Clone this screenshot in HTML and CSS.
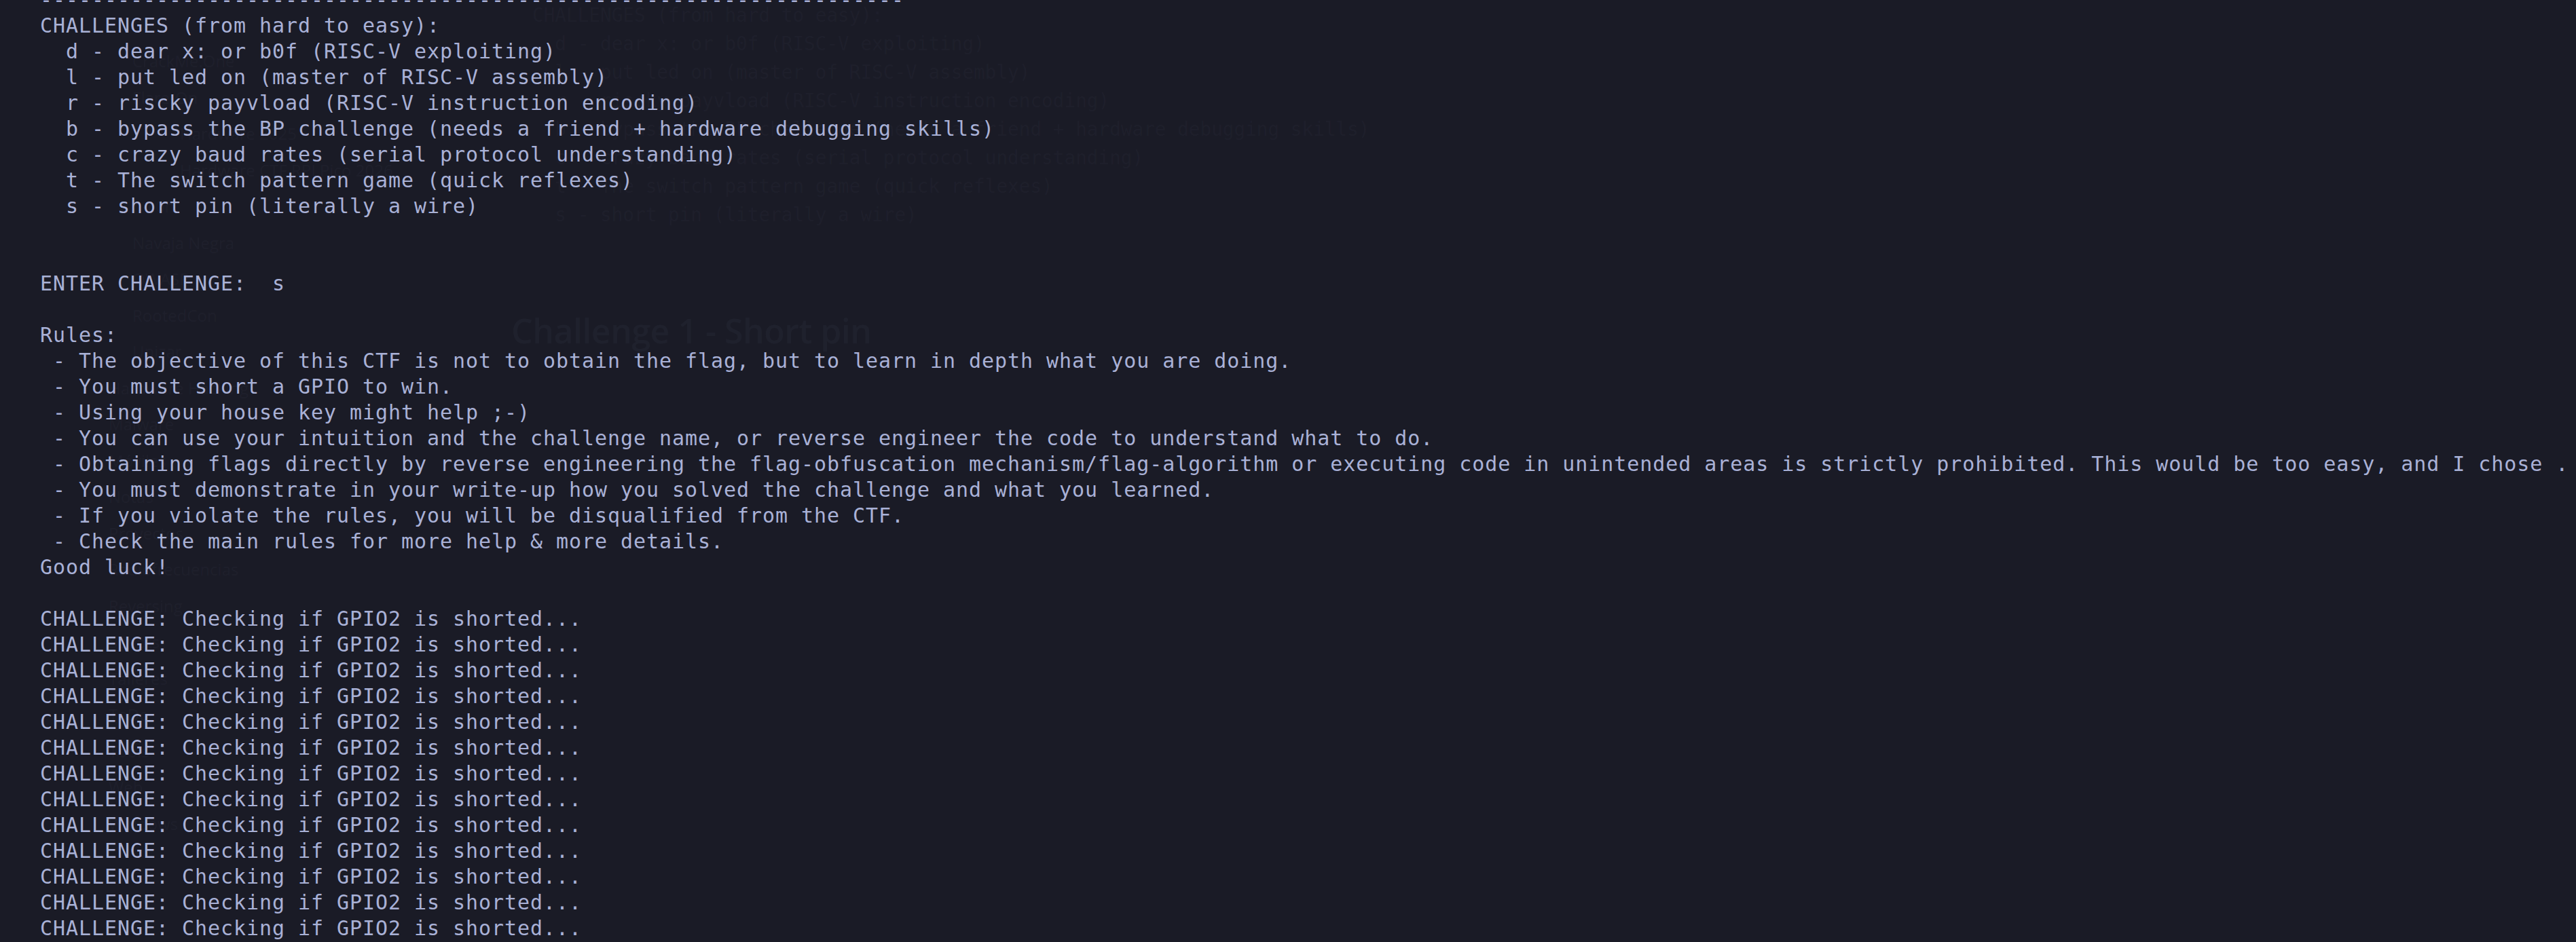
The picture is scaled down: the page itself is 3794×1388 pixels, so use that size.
FILE: index.html
```html
<!DOCTYPE html>
<html lang="en">
<head>
<meta charset="utf-8">
<title>Serial terminal</title>
<link rel="stylesheet" href="styles.css">
</head>
<body>
<div class="screen">
  <div class="ghost">
    <nav class="g-side">
      <div class="g-item sub">CrackMe.One</div>
      <div class="g-item sub">Flare-On</div>
      <div class="g-item sub2">Hardware 2025</div>
      <div class="g-item sub2">Hardware CTF RPI Pico 2026</div>
      <div class="g-item sub">h-c0n</div>
      <div class="g-item sub">Navaja Negra</div>
      <div class="g-item sub">OWASP</div>
      <div class="g-item sub">RootedCon</div>
      <div class="g-item sub">Unizar</div>
      <div class="g-item">Hardware Hacking</div>
      <div class="g-item">Malware</div>
      <div class="g-item">Móviles</div>
      <div class="g-item">Notas</div>
      <div class="g-item">Proyectos</div>
      <div class="g-item">Radiofrecuencias</div>
      <div class="g-item">Reversing</div>
      <div class="g-item">Scripts</div>
      <div class="g-item">Talleres</div>
      <div class="g-item">ToDo</div>
      <div class="g-item">Tools</div>
      <div class="g-item">Web</div>
      <div class="g-item">Windows</div>
    </nav>
    <div class="g-main">
<pre class="g-code">CHALLENGES (from hard to easy):
  d - dear x: or b0f (RISC-V exploiting)
  l - put led on (master of RISC-V assembly)
  r - riscky payvload (RISC-V instruction encoding)
  b - bypass the BP challenge (needs a friend + hardware debugging skills)
  c - crazy baud rates (serial protocol understanding)
  t - The switch pattern game (quick reflexes)
  s - short pin (literally a wire)</pre>
      <h1 class="g-title">Challenge 1 - Short pin</h1>
    </div>
  </div>
<pre class="term">-------------------------------------------------------------------
CHALLENGES (from hard to easy):
  d - dear x: or b0f (RISC-V exploiting)
  l - put led on (master of RISC-V assembly)
  r - riscky payvload (RISC-V instruction encoding)
  b - bypass the BP challenge (needs a friend + hardware debugging skills)
  c - crazy baud rates (serial protocol understanding)
  t - The switch pattern game (quick reflexes)
  s - short pin (literally a wire)


ENTER CHALLENGE:  s

Rules:
 - The objective of this CTF is not to obtain the flag, but to learn in depth what you are doing.
 - You must short a GPIO to win.
 - Using your house key might help ;-)
 - You can use your intuition and the challenge name, or reverse engineer the code to understand what to do.
 - Obtaining flags directly by reverse engineering the flag-obfuscation mechanism/flag-algorithm or executing code in unintended areas is strictly prohibited. This would be too easy, and I chose .
 - You must demonstrate in your write-up how you solved the challenge and what you learned.
 - If you violate the rules, you will be disqualified from the CTF.
 - Check the main rules for more help &amp; more details.
Good luck!

CHALLENGE: Checking if GPIO2 is shorted...
CHALLENGE: Checking if GPIO2 is shorted...
CHALLENGE: Checking if GPIO2 is shorted...
CHALLENGE: Checking if GPIO2 is shorted...
CHALLENGE: Checking if GPIO2 is shorted...
CHALLENGE: Checking if GPIO2 is shorted...
CHALLENGE: Checking if GPIO2 is shorted...
CHALLENGE: Checking if GPIO2 is shorted...
CHALLENGE: Checking if GPIO2 is shorted...
CHALLENGE: Checking if GPIO2 is shorted...
CHALLENGE: Checking if GPIO2 is shorted...
CHALLENGE: Checking if GPIO2 is shorted...
CHALLENGE: Checking if GPIO2 is shorted...
CHALLENGE: Checking if GPIO2 is shorted...</pre>
</div>
</body>
</html>
```
FILE: styles.css
```css
html, body {
  margin: 0;
  padding: 0;
  background: #1a1b26;
  overflow: hidden;
}

.screen {
  display: grid;
  grid-template-columns: 3794px;
  width: 3794px;
  height: 1388px;
  overflow: hidden;
  background: #1a1b26;
}

.ghost, .term {
  grid-area: 1 / 1;
  min-width: 0;
}

/* faint window content seen through the terminal */
.ghost {
  display: flex;
  align-items: flex-start;
  color: rgba(169, 177, 214, 0.05);
}

.g-side {
  flex: none;
  width: 753px;
  box-sizing: border-box;
  padding: 63px 0 0 160px;
  display: flex;
  flex-direction: column;
  font-family: "Open Sans", "Liberation Sans", sans-serif;
  font-size: 24px;
}

.g-item {
  height: 53.5px;
  line-height: 53.5px;
  white-space: nowrap;
}

.g-item.sub { padding-left: 35px; }
.g-item.sub2 { padding-left: 105px; }

.g-main {
  flex: none;
  display: flex;
  flex-direction: column;
}

.g-code {
  margin: 2px 0 0;
  padding-left: 31px;
  font-family: "DejaVu Sans Mono", monospace;
  font-size: 27.7px;
  line-height: 42px;
  color: rgba(169, 177, 214, 0.045);
}

.g-title {
  margin: 124px 0 0;
  font-family: "Open Sans", "Liberation Sans", sans-serif;
  font-weight: 600;
  font-size: 50px;
  line-height: 50px;
  letter-spacing: -0.5px;
  color: rgba(169, 177, 214, 0.045);
}

/* terminal output */
.term {
  margin: -19px 0 0;
  padding-left: 59px;
  font-family: "DejaVu Sans Mono", monospace;
  font-size: 30px;
  letter-spacing: 0.94px;
  line-height: 38px;
  color: #a9b1d6;
  white-space: pre;
  overflow: hidden;
}
```
